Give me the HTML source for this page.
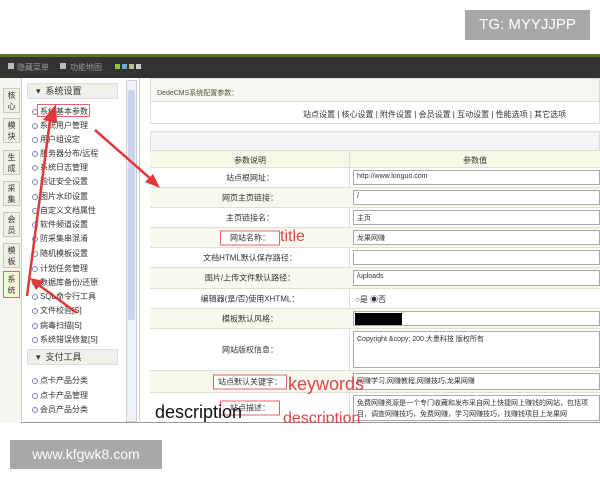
<!DOCTYPE html><html><head><meta charset="utf-8"><style>
*{margin:0;padding:0;box-sizing:border-box}
body{width:600px;height:480px;background:#fff;position:relative;overflow:hidden;font-family:"Liberation Sans","Noto Sans CJK SC",sans-serif;font-size:8px;color:#333}
.a{position:absolute}
.wm{background:#a8a8a8;color:#fff;font-size:15px;text-align:center}
.tab{left:3px;width:17px;height:25px;background:#eef0e6;border:1px solid #c8cbb8;font-size:8px;line-height:11px;padding-top:1px;text-align:center;color:#333}
.mi{left:40px;font-size:8px;color:#333;white-space:nowrap}
.mi:before{content:"";position:absolute;left:-8px;top:3px;width:4px;height:4px;border:1px solid #7a86b8;border-radius:50%}
.row{left:150px;width:450px;border-top:1px solid #e0e0d0}
.lab{position:absolute;left:0;width:200px;text-align:center;top:50%;transform:translateY(-50%)}
.val{position:absolute;left:203px;right:0;top:2px;bottom:2px;border:1px solid #aaa;background:#fff;padding:2px 3px;font-size:7px}
.rb{border:1px solid #e06666}
.red{color:#e0454a}
</style></head><body>
<div class="a wm" style="left:465px;top:10px;width:125px;height:30px;line-height:30px">TG: MYYJJPP</div>
<div class="a" style="left:0;top:54px;width:600px;height:3px;background:#5a7a20"></div>
<div class="a" style="left:0;top:57px;width:600px;height:21px;background:#333431"></div>
<div class="a" style="left:8px;top:63px;width:6px;height:6px;background:#bbb"></div>
<div class="a" style="left:17px;top:62px;color:#999;font-size:8px">隐藏菜单</div>
<div class="a" style="left:60px;top:63px;width:6px;height:6px;background:#bbb"></div>
<div class="a" style="left:70px;top:62px;color:#999;font-size:8px">功能地图</div>
<div class="a" style="left:115px;top:64px;width:5px;height:5px;background:#8c3"></div>
<div class="a" style="left:122px;top:64px;width:5px;height:5px;background:#6ad"></div>
<div class="a" style="left:129px;top:64px;width:5px;height:5px;background:#bb9"></div>
<div class="a" style="left:136px;top:64px;width:5px;height:5px;background:#ccc"></div>
<div class="a" style="left:0;top:78px;width:600px;height:345px;background:#fff;border-bottom:1px solid #999"></div>
<div class="a" style="left:0;top:78px;width:22px;height:345px;background:#f5f6ef;border-right:1px solid #ccc"></div>
<div class="a tab" style="top:88px">核<br>心</div>
<div class="a tab" style="top:118px">模<br>块</div>
<div class="a tab" style="top:150px">生<br>成</div>
<div class="a tab" style="top:181px">采<br>集</div>
<div class="a tab" style="top:212px">会<br>员</div>
<div class="a tab" style="top:243px">模<br>板</div>
<div class="a tab" style="top:271px;height:27px;border:1px solid #e06666;background:#f4f4d8;padding-top:2px">系<br>统</div>
<div class="a" style="left:27px;top:83px;width:91px;height:16px;background:#f0f0ea;border:1px solid #ddd;font-size:9px;line-height:15px;padding-left:8px">▾ &nbsp;系统设置</div>
<div class="a" style="left:37px;top:104px;width:53px;height:13px;border:1px solid #e06666"></div>
<div class="a mi" style="top:106px">系统基本参数</div>
<div class="a mi" style="top:120px">系统用户管理</div>
<div class="a mi" style="top:134px">用户组设定</div>
<div class="a mi" style="top:148px">服务器分布/远程</div>
<div class="a mi" style="top:162px">系统日志管理</div>
<div class="a mi" style="top:176px">验证安全设置</div>
<div class="a mi" style="top:191px">图片水印设置</div>
<div class="a mi" style="top:205px">自定义文档属性</div>
<div class="a mi" style="top:219px">软件频道设置</div>
<div class="a mi" style="top:233px">防采集串混淆</div>
<div class="a mi" style="top:248px">随机模板设置</div>
<div class="a mi" style="top:263px">计划任务管理</div>
<div class="a mi" style="top:277px">数据库备份/还原</div>
<div class="a mi" style="top:291px">SQL命令行工具</div>
<div class="a mi" style="top:305px">文件校验[S]</div>
<div class="a mi" style="top:320px">病毒扫描[S]</div>
<div class="a mi" style="top:334px">系统错误修复[S]</div>
<div class="a" style="left:27px;top:349px;width:91px;height:16px;background:#f0f0ea;border:1px solid #ddd;font-size:9px;line-height:15px;padding-left:8px">▾ &nbsp;支付工具</div>
<div class="a mi" style="top:375px">点卡产品分类</div>
<div class="a mi" style="top:390px">点卡产品管理</div>
<div class="a mi" style="top:404px">会员产品分类</div>
<div class="a" style="left:126px;top:80px;width:11px;height:342px;background:#eef2f8;border:1px solid #c8d0e0"></div>
<div class="a" style="left:128px;top:90px;width:7px;height:230px;background:#c8d6ee;border-radius:2px"></div>
<div class="a" style="left:139px;top:78px;width:1px;height:345px;background:#ccc"></div>
<div class="a" style="left:150px;top:78px;width:450px;height:24px;background:#f7f7f2;border:1px solid #ddd"></div>
<div class="a" style="left:157px;top:88px;font-size:7px;color:#553">DedeCMS系统配置参数：</div>
<div class="a" style="left:150px;top:102px;width:450px;height:22px;border:1px solid #ddd;border-top:0"></div>
<div class="a" style="left:303px;top:109px;font-size:8px;white-space:nowrap">站点设置 | 核心设置 | 附件设置 | 会员设置 | 互动设置 | 性能选项 | 其它选项</div>
<div class="a" style="left:150px;top:131px;width:450px;height:20px;background:#f5f5f5;border:1px solid #ddd"></div>
<div class="a" style="left:150px;top:151px;width:450px;height:16px;background:#f8f8e6"></div>
<div class="a" style="left:349px;top:151px;width:1px;height:272px;background:#ddd"></div>
<div class="a" style="left:150px;top:155px;width:200px;text-align:center">参数说明</div>
<div class="a" style="left:350px;top:155px;width:250px;text-align:center">参数值</div>
<div class="a row" style="top:167px;height:20px"><div class="lab">站点根网址：</div><div class="val">http://www.longuo.com</div></div>
<div class="a row" style="top:187px;height:20px;background:#f8f8ee"><div class="lab">网页主页链接：</div><div class="val">/</div></div>
<div class="a row" style="top:207px;height:20px"><div class="lab">主页链接名：</div><div class="val">主页</div></div>
<div class="a row" style="top:227px;height:20px;background:#f8f8ee"><div class="lab"><span class="rb" style="padding:2px 9px;background:#fff">网站名称：</span></div><div class="val">龙果网赚</div></div>
<div class="a red" style="left:280px;top:228px;font-size:16px">title</div>
<div class="a row" style="top:247px;height:20px"><div class="lab">文档HTML默认保存路径：</div><div class="val"></div></div>
<div class="a row" style="top:267px;height:21px;background:#f8f8ee"><div class="lab">图片/上传文件默认路径：</div><div class="val">/uploads</div></div>
<div class="a row" style="top:288px;height:20px"><div class="lab">编辑器(是/否)使用XHTML：</div><div style="position:absolute;left:205px;top:5px">○是 ◉否</div></div>
<div class="a row" style="top:308px;height:20px;background:#f8f8ee"><div class="lab">模板默认风格：</div><div class="val"><div style="width:47px;height:12px;background:#000;margin:-1px -2px"></div></div></div>
<div class="a row" style="top:328px;height:42px"><div class="lab">网站版权信息：</div><div class="val">Copyright &amp;copy; 200 大墨科技 版权所有</div></div>
<div class="a row" style="top:370px;height:22px;background:#f8f8ee"><div class="lab"><span class="rb" style="padding:2px 4px;background:#fff">站点默认关键字：</span></div><div class="val">网赚学习,网赚教程,网赚技巧,龙果网赚</div></div>
<div class="a row" style="top:392px;height:31px;overflow:hidden"><div class="lab"><span class="rb" style="padding:2px 9px;background:#fff">站点描述：</span></div><div class="val" style="line-height:11px">免费网赚资源是一个专门收藏和发布采自网上快捷网上赚钱的网站，包括项目，调查网赚技巧，免费网赚，学习网赚技巧，找赚钱项目上龙果网</div></div>
<div class="a red" style="left:288px;top:374px;font-size:18px">keywords</div>
<div class="a" style="left:155px;top:402px;font-size:18px;color:#111;height:21px;overflow:hidden">description</div>
<div class="a red" style="left:283px;top:410px;font-size:16px;height:13px;overflow:hidden">description</div>
<svg class="a" style="left:0;top:0" width="600" height="480"><g stroke="#e03838" stroke-width="2.5" fill="#e03838">
<line x1="27" y1="296" x2="50" y2="120"/><polygon points="43,120 56,104 57,123" stroke="none"/>
<line x1="95" y1="130" x2="152" y2="180"/><polygon points="145,182 160,188 153,174" stroke="none"/>
<line x1="77" y1="313" x2="36" y2="283"/><polygon points="30,278 44,281 36,290" stroke="none"/></g></svg>
<div class="a wm" style="left:10px;top:440px;width:152px;height:29px;line-height:29px;font-size:14px">www.kfgwk8.com</div>
</body></html>
